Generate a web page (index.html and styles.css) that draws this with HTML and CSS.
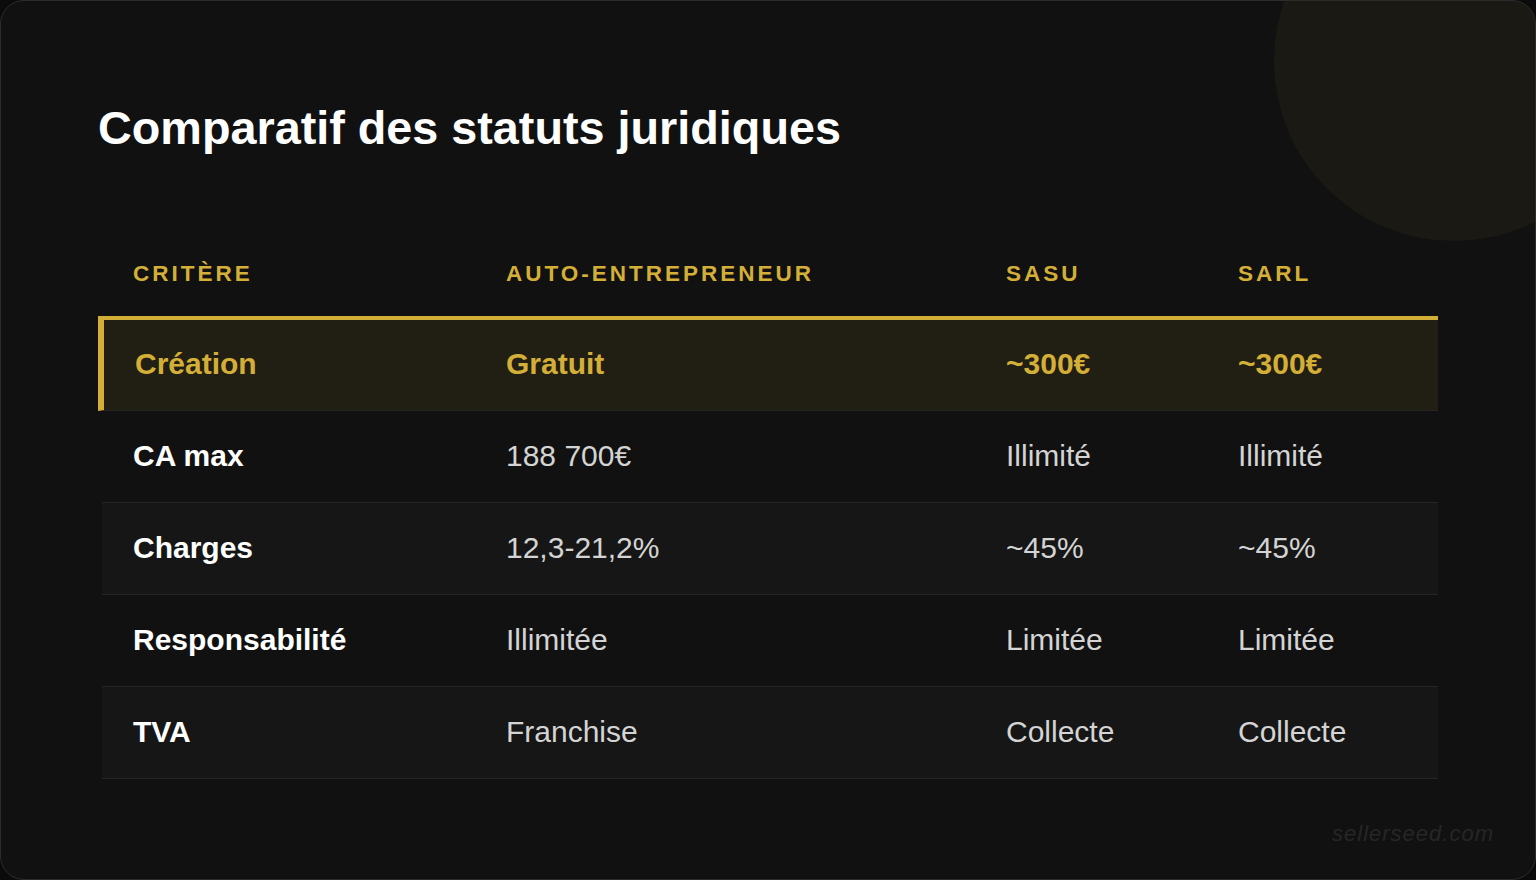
FILE: index.html
```html
<!DOCTYPE html>
<html lang="fr">
<head>
<meta charset="utf-8">
<title>Comparatif des statuts juridiques</title>
<link rel="stylesheet" href="styles.css">
</head>
<body>
<div class="card">
  <div class="glow"></div>
  <h1 class="title">Comparatif des statuts juridiques</h1>
  <div class="table" role="table">
    <div class="row head" role="row">
      <div class="cell">Critère</div>
      <div class="cell">Auto-entrepreneur</div>
      <div class="cell">SASU</div>
      <div class="cell">SARL</div>
    </div>
    <div class="row hl" role="row">
      <div class="cell">Création</div>
      <div class="cell">Gratuit</div>
      <div class="cell">~300€</div>
      <div class="cell">~300€</div>
    </div>
    <div class="row" role="row">
      <div class="cell key">CA max</div>
      <div class="cell">188 700€</div>
      <div class="cell">Illimité</div>
      <div class="cell">Illimité</div>
    </div>
    <div class="row alt" role="row">
      <div class="cell key">Charges</div>
      <div class="cell">12,3-21,2%</div>
      <div class="cell">~45%</div>
      <div class="cell">~45%</div>
    </div>
    <div class="row" role="row">
      <div class="cell key">Responsabilité</div>
      <div class="cell">Illimitée</div>
      <div class="cell">Limitée</div>
      <div class="cell">Limitée</div>
    </div>
    <div class="row alt" role="row">
      <div class="cell key">TVA</div>
      <div class="cell">Franchise</div>
      <div class="cell">Collecte</div>
      <div class="cell">Collecte</div>
    </div>
  </div>
  <div class="mark">sellerseed.com</div>
</div>
</body>
</html>
```

FILE: styles.css
```css
* { box-sizing: border-box; }
html, body {
  margin: 0;
  padding: 0;
  background: #0b0b0b;
}
body {
  font-family: "Liberation Sans", Arial, sans-serif;
  width: 1536px;
  height: 880px;
  overflow: hidden;
}
.card {
  position: relative;
  width: 1536px;
  height: 880px;
  background: #111111;
  border: 1px solid #2c2c2c;
  border-radius: 24px;
  overflow: hidden;
  padding: 100px 97px 0 97px;
}
.glow {
  position: absolute;
  left: 1273px;
  top: -120px;
  width: 360px;
  height: 360px;
  border-radius: 50%;
  background: rgba(212, 175, 55, 0.05);
}
.title {
  position: relative;
  margin: 0;
  font-size: 46.75px;
  line-height: 54px;
  font-weight: 700;
  color: #ffffff;
}
.table {
  position: relative;
  margin: 77px 0 0 4px;
  width: 1336px;
}
.row {
  display: grid;
  grid-template-columns: 373px 500px 232px 231px;
  align-items: center;
  height: 92px;
  padding-bottom: 2px;
  border-bottom: 1px solid #252525;
  font-size: 30px;
  line-height: 34px;
  color: #d4d4d4;
}
.cell {
  padding-left: 31px;
  white-space: nowrap;
}
.row.head {
  height: 84px;
  padding-bottom: 0;
  border-bottom: none;
  font-size: 22.5px;
  line-height: 26px;
  font-weight: 700;
  letter-spacing: 3px;
  text-transform: uppercase;
  color: #d4af37;
}
.row.hl {
  margin-left: -4px;
  width: 1340px;
  height: 95px;
  grid-template-columns: 371px 500px 232px 231px;
  background: #211e14;
  border-left: 6px solid #d4af37;
  border-top: 4px solid #d4af37;
  color: #d4af37;
  font-weight: 700;
  padding-bottom: 2px;
}
.row.alt {
  background: #161616;
}
.key {
  color: #ffffff;
  font-weight: 700;
}
.mark {
  position: absolute;
  right: 41px;
  bottom: 32px;
  font-size: 22px;
  line-height: 26px;
  font-style: italic;
  letter-spacing: 1px;
  color: #262626;
}
```
